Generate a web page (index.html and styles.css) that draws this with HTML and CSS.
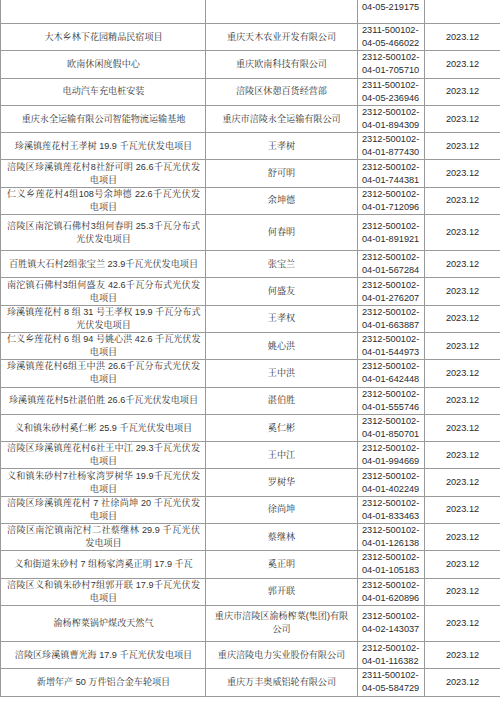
FILE: index.html
```html
<!DOCTYPE html>
<html lang="zh-CN">
<head>
<meta charset="utf-8">
<title>项目备案表</title>
<link rel="stylesheet" href="styles.css">
</head>
<body>
<table class="sheet">
  <colgroup>
    <col class="w1"><col class="w2"><col class="w3"><col class="w4">
  </colgroup>
  <tbody>
    <tr class="first"><td></td><td></td><td class="cid">04-05-219175</td><td></td></tr>
    <tr><td class="c1">大木乡林下花园精品民宿项目</td><td>重庆天木农业开发有限公司</td><td class="cid">2311-500102-<br>04-05-466022</td><td class="cd">2023.12</td></tr>
    <tr><td class="c1">欧南休闲度假中心</td><td>重庆欧南科技有限公司</td><td class="cid">2312-500102-<br>04-01-705710</td><td class="cd">2023.12</td></tr>
    <tr><td class="c1">电动汽车充电桩安装</td><td>涪陵区休憩百货经营部</td><td class="cid">2311-500102-<br>04-05-236946</td><td class="cd">2023.12</td></tr>
    <tr><td class="c1">重庆永全运输有限公司智能物流运输基地</td><td>重庆市涪陵永全运输有限公司</td><td class="cid">2312-500102-<br>04-01-894309</td><td class="cd">2023.12</td></tr>
    <tr><td class="c1">珍溪镇莲花村王孝树 19.9 千瓦光伏发电项目</td><td>王孝树</td><td class="cid">2312-500102-<br>04-01-877430</td><td class="cd">2023.12</td></tr>
    <tr><td class="c1"><span class="ln jl">涪陵区珍溪镇莲花村8社舒可明 26.6千瓦光伏发</span><span class="ln">电项目</span></td><td>舒可明</td><td class="cid">2312-500102-<br>04-01-744381</td><td class="cd">2023.12</td></tr>
    <tr><td class="c1"><span class="ln jl">仁义乡莲花村4组108号余坤德 22.6千瓦光伏发</span><span class="ln">电项目</span></td><td>余坤德</td><td class="cid">2312-500102-<br>04-01-712096</td><td class="cd">2023.12</td></tr>
    <tr class="tall"><td class="c1"><span class="ln jl">涪陵区南沱镇石佛村3组何春明 25.3千瓦分布式</span><span class="ln">光伏发电项目</span></td><td>何春明</td><td class="cid">2312-500102-<br>04-01-891921</td><td class="cd">2023.12</td></tr>
    <tr><td class="c1">百胜镇大石村2组张宝兰 23.9千瓦光伏发电项目</td><td>张宝兰</td><td class="cid">2312-500102-<br>04-01-567284</td><td class="cd">2023.12</td></tr>
    <tr><td class="c1"><span class="ln jl">南沱镇石佛村3组何盛友 42.6千瓦分布式光伏发</span><span class="ln">电项目</span></td><td>何盛友</td><td class="cid">2312-500102-<br>04-01-276207</td><td class="cd">2023.12</td></tr>
    <tr><td class="c1"><span class="ln jl">珍溪镇莲花村 8 组 31 号王孝权 19.9 千瓦分布式</span><span class="ln">光伏发电项目</span></td><td>王孝权</td><td class="cid">2312-500102-<br>04-01-663887</td><td class="cd">2023.12</td></tr>
    <tr><td class="c1"><span class="ln jl">仁义乡莲花村 6 组 94 号姚心洪 42.6 千瓦光伏发</span><span class="ln">电项目</span></td><td>姚心洪</td><td class="cid">2312-500102-<br>04-01-544973</td><td class="cd">2023.12</td></tr>
    <tr><td class="c1"><span class="ln jl">珍溪镇莲花村6组王中洪 26.6千瓦分布式光伏发</span><span class="ln">电项目</span></td><td>王中洪</td><td class="cid">2312-500102-<br>04-01-642448</td><td class="cd">2023.12</td></tr>
    <tr><td class="c1">珍溪镇莲花村5社湛伯胜 26.6千瓦光伏发电项目</td><td>湛伯胜</td><td class="cid">2312-500102-<br>04-01-555746</td><td class="cd">2023.12</td></tr>
    <tr><td class="c1">义和镇朱砂村奚仁彬 25.9 千瓦光伏发电项目</td><td>奚仁彬</td><td class="cid">2312-500102-<br>04-01-850701</td><td class="cd">2023.12</td></tr>
    <tr><td class="c1"><span class="ln jl">涪陵区珍溪镇莲花村6社王中江 29.3千瓦光伏发</span><span class="ln">电项目</span></td><td>王中江</td><td class="cid">2312-500102-<br>04-01-994669</td><td class="cd">2023.12</td></tr>
    <tr><td class="c1"><span class="ln jl">义和镇朱砂村7社杨家湾罗树华 19.9千瓦光伏发</span><span class="ln">电项目</span></td><td>罗树华</td><td class="cid">2312-500102-<br>04-01-402249</td><td class="cd">2023.12</td></tr>
    <tr><td class="c1"><span class="ln jl">涪陵区珍溪镇莲花村 7 社徐尚坤 20 千瓦光伏发</span><span class="ln">电项目</span></td><td>徐尚坤</td><td class="cid">2312-500102-<br>04-01-833463</td><td class="cd">2023.12</td></tr>
    <tr><td class="c1"><span class="ln jl">涪陵区南沱镇南沱村二社蔡继林 29.9 千瓦光伏</span><span class="ln">发电项目</span></td><td>蔡继林</td><td class="cid">2312-500102-<br>04-01-126138</td><td class="cd">2023.12</td></tr>
    <tr><td class="c1">义和街道朱砂村 7 组杨家湾奚正明 17.9 千瓦</td><td>奚正明</td><td class="cid">2312-500102-<br>04-01-105183</td><td class="cd">2023.12</td></tr>
    <tr><td class="c1"><span class="ln jl">涪陵区义和镇朱砂村7组郭开联 17.9千瓦光伏发</span><span class="ln">电项目</span></td><td>郭开联</td><td class="cid">2312-500102-<br>04-01-620896</td><td class="cd">2023.12</td></tr>
    <tr class="tall"><td class="c1">渝杨榨菜锅炉煤改天然气</td><td><span class="ln">重庆市涪陵区渝杨榨菜(集团)有限</span><span class="ln">公司</span></td><td class="cid">2312-500102-<br>04-02-143037</td><td class="cd">2023.12</td></tr>
    <tr><td class="c1">涪陵区珍溪镇曹光海 17.9 千瓦光伏发电项目</td><td>重庆涪陵电力实业股份有限公司</td><td class="cid">2312-500102-<br>04-01-116382</td><td class="cd">2023.12</td></tr>
    <tr><td class="c1">新增年产 50 万件铝合金车轮项目</td><td>重庆万丰奥威铝轮有限公司</td><td class="cid">2311-500102-<br>04-05-584729</td><td class="cd">2023.12</td></tr>
  </tbody>
</table>
</body>
</html>
```

FILE: styles.css
```css
html, body {
  margin: 0;
  padding: 0;
  background: #ffffff;
}

.sheet {
  border-collapse: collapse;
  table-layout: fixed;
  width: 500px;
  font-family: "Liberation Sans", "Noto Serif CJK SC", "Noto Sans CJK SC", sans-serif;
  font-size: 9.1px;
  color: #333333;
}

.w1 { width: 205px; }
.w2 { width: 152px; }
.w3 { width: 67px; }
.w4 { width: 76px; }

.sheet td {
  border: 1px solid #9a9a9a;
  padding: 0 5px;
  height: 26.3px;
  text-align: center;
  vertical-align: middle;
  line-height: 13px;
  overflow: hidden;
  white-space: nowrap;
}

.sheet tr.first td {
  height: 22px;
  border-top: 0;
  vertical-align: top;
  padding-top: 1px;
}

.sheet tr.tall td {
  height: 35px;
}

.sheet td.c1 {
  padding: 0 5px 0 6px;
}

.sheet td.cid {
  text-align: left;
  padding: 0 3px 0 4px;
  font-size: 9.2px;
  line-height: 13px;
  color: #2a2a2a;
}

.sheet tr.first td.cid {
  padding-top: 1px;
}

.sheet td.cd {
  font-size: 9.2px;
  color: #2a2a2a;
}

.ln {
  display: block;
}

.jl {
  text-align: justify;
  text-align-last: justify;
}
```
